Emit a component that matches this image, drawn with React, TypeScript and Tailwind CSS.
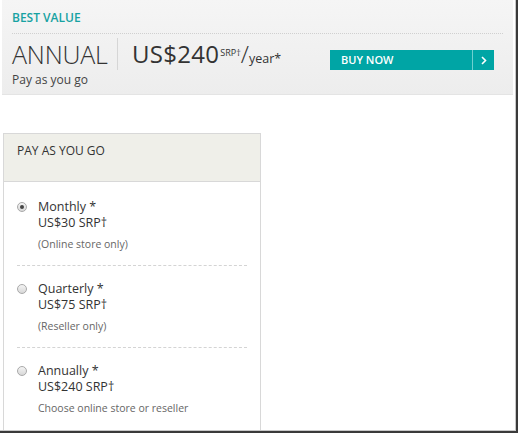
import React from 'react';

const FONT = { fontFamily: '"Open Sans", "Noto Sans", Arial, sans-serif' };

const OPTIONS = [
  { name: 'Monthly *', price: 'US$30 SRP†', note: '(Online store only)', checked: true },
  { name: 'Quarterly *', price: 'US$75 SRP†', note: '(Reseller only)', checked: false },
  { name: 'Annually *', price: 'US$240 SRP†', note: 'Choose online store or reseller', checked: false },
];

function Radio({ checked }: { checked: boolean }) {
  return (
    <span className="mt-[3px] flex h-[10px] w-[10px] shrink-0 items-center justify-center rounded-full border border-[#a9a9a9] bg-gradient-to-b from-[#f4f4f4] to-[#d8d8d8]">
      {checked && <span className="h-[4px] w-[4px] rounded-full bg-[#444]" />}
    </span>
  );
}

export default function App() {
  return (
    <div className="h-[435px] w-[520px] bg-white" style={FONT}>
      <div className="flex h-[433px] w-[518px] flex-col border-b-[2px] border-r-[2px] border-[#3a3a3a]">
        <div className="flex h-full w-full flex-col border-b border-r border-[#c8c8c8] bg-white">
          {/* best value banner */}
          <div className="mx-[2px] border-b border-[#e4e4e4] bg-gradient-to-b from-[#f5f5f5] to-[#ededed] px-[10px] pb-[6px] pt-[10px]">
            <div className="text-[12px] font-semibold leading-[16px] text-[#17a2a2]">BEST VALUE</div>
            <div className="mt-[7px] border-t border-dotted border-[#d0d0d0]" />
            <div className="mt-[4px] flex items-start">
              <div className="w-[106px] border-r border-[#d6d6d6] py-[2px] pr-2">
                <div className="text-[25px] font-light leading-[28px] tracking-[-0.2px] text-[#333]">ANNUAL</div>
              </div>
              <div className="ml-[14px] flex items-baseline text-[#333]">
                <span className="text-[24px] leading-[32px] tracking-[0.3px]">US$240</span>
                <span className="relative -top-[7px] ml-[1px] text-[9px]">SRP†</span>
                <span className="text-[24px] font-light leading-[32px]">/</span>
                <span className="text-[12.5px]">year*</span>
              </div>
              <div className="ml-auto mr-[9px] mt-[12px] flex h-[20px] w-[164px] bg-[#00a5a5] text-white">
                <div className="flex flex-1 items-center pl-[11px] text-[11px] font-semibold">BUY NOW</div>
                <div className="flex w-[22px] items-center justify-center border-l border-[#6fd0d0]">
                  <svg width="6" height="9" viewBox="0 0 6 9" fill="none">
                    <path d="M1 1l3.5 3.5L1 8" stroke="white" strokeWidth="1.6" />
                  </svg>
                </div>
              </div>
            </div>
            <div className="mt-[2px] text-[12px] leading-[16px] text-[#444]">Pay as you go</div>
          </div>

          {/* pay as you go card */}
          <div className="ml-[3px] mt-[38px] flex w-[258px] flex-1 flex-col border-x border-t border-[#d8d8d8]">
            <div className="h-[48px] border-b border-[#d8d8d8] bg-[#efefe9] px-[13px] pt-[9px] text-[12px] leading-[16px] text-[#333]">
              PAY AS YOU GO
            </div>
            <div className="px-[13px] pt-[17px]">
              {OPTIONS.map((o, i) => (
                <div
                  key={o.name}
                  className={`flex gap-[11px] ${i < OPTIONS.length - 1 ? 'mb-[15px] border-b border-dashed border-[#d4d4d4] pb-[14px]' : ''}`}
                >
                  <Radio checked={o.checked} />
                  <div className="text-[#333]">
                    <div className="text-[12.5px] leading-[16px]">{o.name}</div>
                    <div className="text-[12.5px] leading-[16px]">{o.price}</div>
                    <div className="mt-[6px] text-[10.5px] leading-[14px] text-[#666]">{o.note}</div>
                  </div>
                </div>
              ))}
            </div>
          </div>
        </div>
      </div>
    </div>
  );
}
